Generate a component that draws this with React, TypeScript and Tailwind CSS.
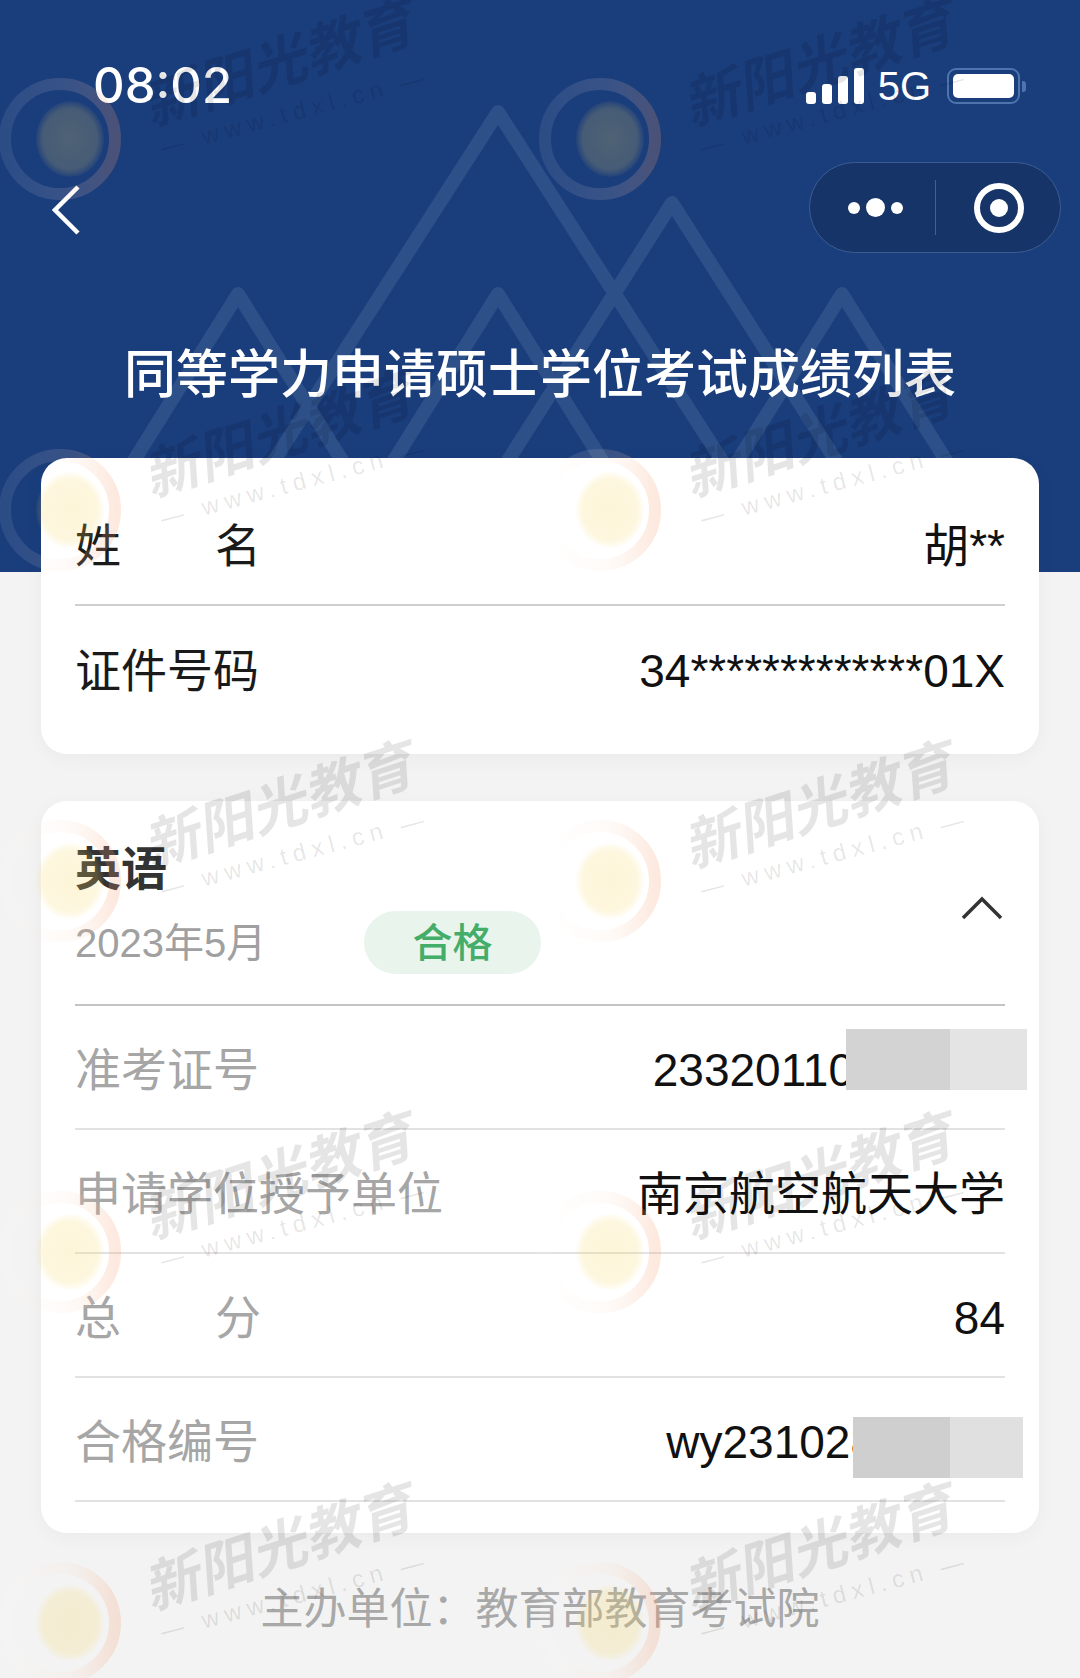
const Watermark = ({ id }: { id: number }) => (
  <div className="relative h-[371px] w-[540px]">
    <svg className="absolute left-0 top-[123px] h-[124px] w-[124px] overflow-visible" viewBox="0 0 124 124">
      <defs>
        <linearGradient id={`ring${id}`} x1="0" y1="0" x2="1" y2="0">
          <stop offset="0" stopColor="#ffffff" stopOpacity="0.08" />
          <stop offset="0.6" stopColor="#fbd9c4" stopOpacity="0.14" />
          <stop offset="1" stopColor="#f59a6a" stopOpacity="0.22" />
        </linearGradient>
        <radialGradient id={`disc${id}`}>
          <stop offset="0" stopColor="#f7d65c" stopOpacity="0.24" />
          <stop offset="0.8" stopColor="#f7d65c" stopOpacity="0.2" />
          <stop offset="1" stopColor="#f7d65c" stopOpacity="0.04" />
        </radialGradient>
      </defs>
      <circle cx="60" cy="62" r="55" fill="none" stroke={`url(#ring${id})`} strokeWidth="12" />
      <ellipse cx="70" cy="62" rx="34" ry="38" fill={`url(#disc${id})`} />
    </svg>
    <div className="absolute left-[278px] top-[111px] -translate-x-1/2 -translate-y-1/2 -rotate-[18deg] whitespace-nowrap text-[56px] font-bold italic leading-none text-black/10">
      新阳光教育
    </div>
    <div className="absolute left-[295px] top-[158px] -translate-x-1/2 -translate-y-1/2 -rotate-[15deg] whitespace-nowrap text-[24px] leading-none tracking-[6px] text-black/10">
      — www.tdxl.cn —
    </div>
  </div>
);

const Row = ({
  label,
  value,
  muted,
  last,
  spread,
  heavy,
  valueClass,
  mask,
}: {
  label: string;
  value: React.ReactNode;
  muted?: boolean;
  last?: boolean;
  spread?: boolean;
  heavy?: boolean;
  valueClass?: string;
  mask?: string;
}) => (
  <div
    className={`relative flex h-[124px] items-center justify-between pt-[6px] text-[46px] ${
      last ? "" : heavy ? "border-b-2 border-[#cfcfcf]" : "border-b-2 border-[#e2e2e2]"
    }`}
  >
    {spread ? (
      <div className={`flex w-[186px] justify-between ${muted ? "text-[#a6a6a6]" : "text-[#1a1a1a]"}`}>
        <span>{label[0]}</span>
        <span>{label[1]}</span>
      </div>
    ) : (
      <div className={muted ? "text-[#a6a6a6]" : "text-[#1a1a1a]"}>{label}</div>
    )}
    <div className={`text-[#111] ${valueClass ?? ""}`}>{value}</div>
    {mask === "a" && (
      <div className="absolute left-[771px] top-[23px] flex h-[61px] w-[181px]">
        <div className="w-[104px] bg-[#d3d3d3]" />
        <div className="flex-1 bg-[#e4e4e4]" />
      </div>
    )}
    {mask === "b" && (
      <div className="absolute left-[778px] top-[39px] flex h-[61px] w-[170px]">
        <div className="w-[97px] bg-[#cfcfcf]" />
        <div className="flex-1 bg-[#e0e0e0]" />
      </div>
    )}
  </div>
);

export default function App() {
  return (
    <div className="relative h-[1678px] w-[1080px] overflow-hidden bg-[#f3f3f3] [font-family:'Liberation_Sans','Noto_Sans_CJK_SC',sans-serif]">
      {/* Header */}
      <div className="relative h-[572px] overflow-hidden bg-[#1a3d7c]">
        <svg className="absolute left-0 top-0 h-[572px] w-[1080px]" viewBox="0 0 1080 572" fill="none" stroke="#2d5089" strokeWidth="14" strokeLinejoin="round">
          <polyline points="268,470 498,112 728,470" />
          <polyline points="502,470 672,203 842,470" />
          <polyline points="128,470 238,294 348,470" />
          <polyline points="388,470 498,294 608,470" />
          <polyline points="732,470 842,294 952,470" />
        </svg>

        <div className="relative">
          {/* Status bar */}
          <div className="flex h-[112px] items-end justify-between pl-[93px] pr-[54px]">
            <div className="h-[52px] text-[49px] font-medium leading-[52px] text-white [font-family:Inter,sans-serif]">08:02</div>
            <div className="flex h-[52px] items-center">
              <div className="flex h-[36px] items-end gap-[6px]">
                <div className="h-[12px] w-[10px] rounded-[3px] bg-white" />
                <div className="h-[20px] w-[10px] rounded-[3px] bg-white" />
                <div className="h-[28px] w-[10px] rounded-[3px] bg-white" />
                <div className="h-[36px] w-[10px] rounded-[3px] bg-white" />
              </div>
              <div className="ml-[14px] text-[40px] leading-none text-white">5G</div>
              <div className="ml-[16px] flex h-[36px] w-[73px] rounded-[9px] border-2 border-[#4d74ad] p-[4px]">
                <div className="flex-1 rounded-[5px] bg-white" />
              </div>
              <div className="ml-[2px] h-[11px] w-[4px] rounded-r-[3px] bg-[#4d74ad]" />
            </div>
          </div>

          {/* Nav */}
          <div className="mt-[50px] flex h-[91px] items-center justify-between pl-[52px] pr-[19px]">
            <svg className="mt-[4px]" width="28" height="50" viewBox="0 0 28 50" fill="none" stroke="white" strokeWidth="4.5">
              <polyline points="26,2 3,25 26,48" />
            </svg>
            <div className="flex h-[91px] w-[252px] items-center rounded-full border border-[#3a5d93] bg-[#173468]">
              <div className="flex w-[125px] items-center justify-end gap-[6px] pr-[32px]">
                <div className="h-[12px] w-[12px] rounded-full bg-white" />
                <div className="h-[19px] w-[19px] rounded-full bg-white" />
                <div className="h-[12px] w-[12px] rounded-full bg-white" />
              </div>
              <div className="h-[55px] w-px bg-[#3f6198]" />
              <div className="flex flex-1 items-center justify-center pl-[1px]">
                <div className="flex h-[50px] w-[50px] items-center justify-center rounded-full border-[6px] border-white">
                  <div className="h-[18px] w-[18px] rounded-full bg-white" />
                </div>
              </div>
            </div>
          </div>

          <h1 className="mt-[92px] text-center text-[52px] font-medium leading-[60px] text-white">
            同等学力申请硕士学位考试成绩列表
          </h1>
        </div>
      </div>

      {/* Cards */}
      <div className="relative -mt-[114px] px-[41px]">
        <div className="rounded-[26px] bg-white px-[34px] py-6 shadow-[0_4px_20px_rgba(0,0,0,0.04)]">
          <Row label="姓名" spread heavy value="胡**" />
          <Row label="证件号码" last value="34*************01X" />
        </div>

        <div className="mt-[47px] rounded-[26px] bg-white px-[34px] pb-[31px] shadow-[0_4px_20px_rgba(0,0,0,0.04)]">
          <div className="relative h-[205px] border-b-2 border-[#c4c4c4]">
            <div className="pt-[41px] text-[46px] font-bold leading-[54px] text-[#333]">英语</div>
            <div className="mt-[15px] flex h-[63px] items-center">
              <div className="w-[289px] text-[40px] text-[#a0a0a0]">2023年5月</div>
              <div className="flex h-[63px] w-[177px] items-center justify-center rounded-full bg-[#e9f5ec] text-[40px] font-medium text-[#45ad6a]">
                合格
              </div>
            </div>
            <svg className="absolute right-[2px] top-[95px]" width="42" height="24" viewBox="0 0 42 24" fill="none" stroke="#333" strokeWidth="3.5">
              <polyline points="2,22 21,3 40,22" />
            </svg>
          </div>
          <Row label="准考证号" muted value="23320110" valueClass="mr-[151px]" mask="a" />
          <Row label="申请学位授予单位" muted value="南京航空航天大学" />
          <Row label="总分" spread muted value="84" />
          <Row label="合格编号" muted value="wy231028" valueClass="mr-[129px]" mask="b" />
        </div>
      </div>

      <div className="relative mt-[50px] text-center text-[43px] leading-[52px] text-[#a8a8a8]">
        主办单位：教育部教育考试院
      </div>

      {/* Watermark on top of everything */}
      <div className="pointer-events-none absolute -top-[46px] left-0 grid grid-cols-2">
        {Array.from({ length: 10 }).map((_, i) => (
          <Watermark key={i} id={i} />
        ))}
      </div>
    </div>
  );
}
